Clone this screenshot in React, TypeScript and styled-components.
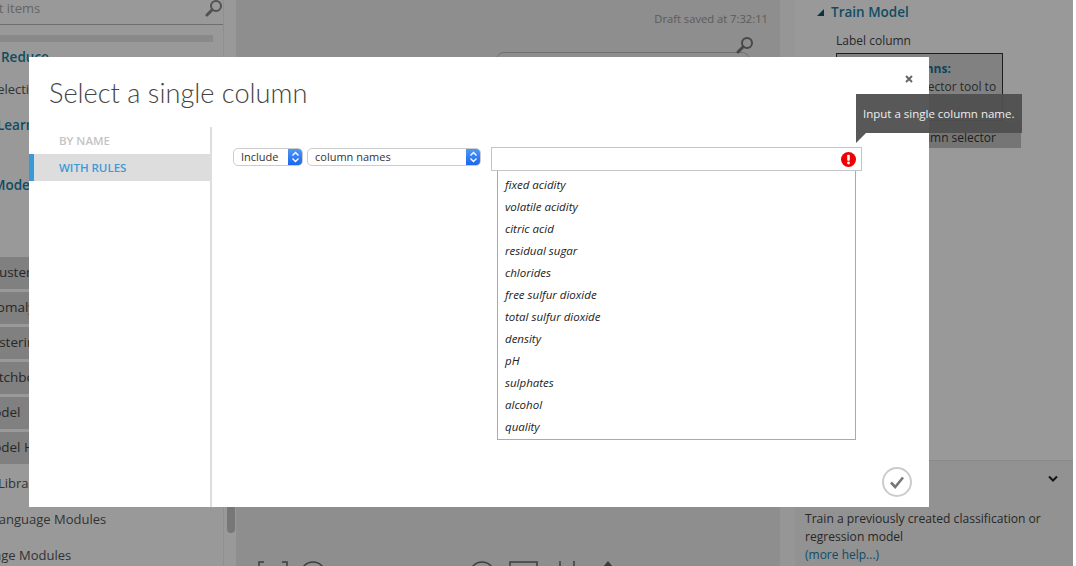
import * as React from "react";
import styled, { createGlobalStyle } from "styled-components";

const GlobalStyle = createGlobalStyle`
  html, body {
    margin: 0;
    padding: 0;
    background: #fff;
    overflow: hidden;
  }
  body {
    font-family: "Open Sans", "Noto Sans", sans-serif;
    color: #444;
  }
`;

const Stage = styled.div`
  position: relative;
  width: 1073px;
  height: 566px;
  overflow: hidden;
  display: grid;
  grid-template-columns: 237px 543px 15px 1fr;
  background: #fff;
`;

/* left palette */
const Sidebar = styled.div`
  display: flex;
  height: 566px;
  overflow: hidden;
  background: #fff;
`;

const PaletteList = styled.div`
  width: 223px;
  flex: none;
  overflow: hidden;
  font-size: 13px;
  color: #555;
`;

const SearchBox = styled.div`
  display: flex;
  align-items: center;
  justify-content: space-between;
  box-sizing: border-box;
  width: 238px;
  height: 25px;
  margin: 0 0 10px -10px;
  padding: 0 4px 8px 0;
  border: 1px solid #b8b8b8;
  border-top: 0;
  color: #aaa;
  font-size: 13px;
  white-space: nowrap;
  overflow: hidden;
`;

const SearchHint = styled.span`
  margin-left: -102px;
`;

const SearchGlyph = styled.span`
  color: #888;
  line-height: 0;
`;

const PaletteBar = styled.div`
  width: 213px;
  height: 7px;
  background: #e4e4e4;
`;

const Group = styled.div<{ $top: number; $shift: number }>`
  margin: ${(p) => p.$top}px 0 0 ${(p) => p.$shift}px;
  height: 20px;
  line-height: 20px;
  white-space: nowrap;
  color: #1c7fa6;
  font-weight: 600;
  font-size: 13.5px;
`;

const Leaf = styled.div<{ $top: number; $shift: number }>`
  margin: ${(p) => p.$top}px 0 0 ${(p) => p.$shift}px;
  height: 20px;
  line-height: 20px;
  white-space: nowrap;
`;

const ModuleList = styled.div`
  margin-top: 62px;
`;

const ModuleRow = styled.div<{ $shift: number }>`
  height: 32px;
  line-height: 31px;
  margin-bottom: 3px;
  text-indent: ${(p) => p.$shift}px;
  background: #d5d5d5;
  white-space: nowrap;
  color: #444;
  font-size: 13.5px;
`;

const ScrollTrack = styled.div`
  width: 14px;
  box-sizing: border-box;
  flex: none;
  padding: 400px 0 0 3px;
  border-left: 1px solid #eee;
  border-right: 1px solid #eee;
`;

const ScrollThumb = styled.div`
  width: 8px;
  height: 133px;
  border-radius: 4px;
  background: #c6c6c6;
`;

/* canvas */
const Canvas = styled.div`
  display: flex;
  flex-direction: column;
  height: 566px;
  overflow: hidden;
  background: #ededed;
`;

const Draft = styled.div`
  margin-top: 11px;
  padding-right: 12px;
  text-align: right;
  font-size: 11.2px;
  line-height: 16px;
  color: #999;
`;

const CanvasSearch = styled.div`
  position: relative;
  box-sizing: border-box;
  width: 254px;
  height: 40px;
  margin: 25px 0 0 259px;
  border: 1px solid #bbb;
  border-radius: 8px;
`;

const CanvasSearchIcon = styled.div`
  position: absolute;
  top: -17px;
  right: -5px;
  color: #777;
`;

const CanvasTools = styled.div`
  display: flex;
  align-items: flex-start;
  margin-top: auto;
  height: 5px;
  padding-left: 21px;
  color: #666;
`;

const ToolIcon = styled.svg<{ $gap: number }>`
  flex: none;
  margin-left: ${(p) => p.$gap}px;
`;

const Gutter = styled.div`
  background: #fafafa;
  height: 566px;
`;

/* properties */
const Properties = styled.div`
  display: flex;
  flex-direction: column;
  height: 566px;
  background: #fff;
  font-size: 12px;
  color: #444;
`;

const PropHead = styled.div`
  display: flex;
  align-items: center;
  gap: 7px;
  height: 24px;
  padding-left: 22px;
  box-sizing: border-box;
  color: #1c7fa6;
  font-size: 13.5px;
  font-weight: 600;
`;

const Caret = styled.span`
  width: 0;
  height: 0;
  border-style: solid;
  border-width: 0 0 7px 7px;
  border-color: transparent transparent #14546e transparent;
`;

const PropLabel = styled.div`
  margin: 9px 0 4px 41px;
  font-size: 12px;
  line-height: 16px;
`;

const ColumnBox = styled.div`
  box-sizing: border-box;
  width: 167px;
  height: 68px;
  margin-left: 41px;
  padding: 6px 0 0 6px;
  border: 1px solid #333;
  background: #d8d8d8;
  line-height: 18px;
  white-space: nowrap;
  overflow: hidden;
`;

const BoxTitle = styled.div`
  color: #14749a;
  font-weight: 700;
`;

const LaunchButton = styled.div`
  box-sizing: border-box;
  width: 185px;
  height: 27px;
  margin-left: 41px;
  padding: 8px 25px 0 0;
  background: #c3c3c3;
  color: #333;
  line-height: 18px;
  text-align: right;
`;

const QuickHelp = styled.div`
  margin-top: auto;
  box-sizing: border-box;
  height: 106px;
  padding: 14px 0 0 10px;
  border-top: 1px solid #e6e6e6;
  background: #f3f3f3;
`;

const HelpChevron = styled.div`
  display: flex;
  justify-content: flex-end;
  height: 35px;
  padding-right: 15px;
  color: #222;
`;

const HelpText = styled.div`
  width: 250px;
  line-height: 18px;
  color: #444;
  font-size: 12.1px;
`;

const HelpLink = styled.div`
  line-height: 18px;
  color: #1c7fa6;
`;

/* dialog */
const Overlay = styled.div`
  position: absolute;
  inset: 0;
  padding: 57px 0 0 29px;
  background: rgba(0, 0, 0, 0.4);
`;

const Dialog = styled.div`
  display: flex;
  flex-direction: column;
  width: 900px;
  height: 450px;
  background: #fff;
`;

const DialogHeader = styled.div`
  display: flex;
  justify-content: space-between;
  box-sizing: border-box;
  height: 70px;
  padding: 17px 16px 0 20px;
`;

const Title = styled.h1`
  margin: 0;
  font-family: "Lato", "Open Sans", sans-serif;
  font-size: 27.2px;
  line-height: 38px;
  font-weight: 300;
  color: #444;
`;

const CloseButton = styled.div`
  padding-top: 1px;
  color: #666;
  line-height: 0;
`;

const DialogBody = styled.div`
  display: flex;
  flex: 1;
  min-height: 0;
`;

const Nav = styled.div`
  box-sizing: border-box;
  flex: none;
  width: 183px;
  border-right: 2px solid #ddd;
`;

const NavItem = styled.div<{ $active?: boolean }>`
  box-sizing: border-box;
  height: 27px;
  padding-left: ${(p) => (p.$active ? 25 : 30)}px;
  border-left: ${(p) => (p.$active ? "5px solid #3a9ad9" : "0")};
  background: ${(p) => (p.$active ? "#ddd" : "transparent")};
  color: ${(p) => (p.$active ? "#3a9ad9" : "#c4c4c4")};
  font-size: 11.5px;
  font-weight: 600;
  line-height: 28px;
`;

const Rules = styled.div`
  display: flex;
  flex-direction: column;
  flex: 1;
  padding: 21px 0 0 21px;
`;

const RuleRow = styled.div`
  display: flex;
  align-items: flex-start;
`;

const SelectBox = styled.div<{ $width: number; $gap: number }>`
  display: flex;
  justify-content: space-between;
  box-sizing: border-box;
  width: ${(p) => p.$width}px;
  height: 18px;
  margin-right: ${(p) => p.$gap}px;
  padding-left: 7px;
  border: 1px solid #ccc;
  border-radius: 5px;
  font-size: 11px;
  line-height: 16px;
  color: #333;
  overflow: hidden;
`;

const Stepper = styled.span`
  display: flex;
  align-items: center;
  justify-content: center;
  flex: none;
  width: 15px;
  margin: -1px -1px -1px 0;
  background: linear-gradient(#4f9bf8, #1a62f0);
  color: #fff;
`;

const InputWrap = styled.div`
  position: relative;
  margin-top: -1px;
`;

const ColumnInput = styled.div`
  display: flex;
  align-items: center;
  justify-content: flex-end;
  box-sizing: border-box;
  width: 371px;
  height: 24px;
  padding-right: 5px;
  border: 1px solid #c4c4c4;
`;

const Tooltip = styled.div`
  position: absolute;
  left: 365px;
  bottom: 38px;
  box-sizing: border-box;
  width: 166px;
  height: 39px;
  padding-left: 7px;
  background: rgba(79, 79, 79, 0.95);
  color: #eee;
  font-size: 11.5px;
  line-height: 39px;
  white-space: nowrap;

  &::after {
    content: "";
    position: absolute;
    left: 0;
    top: 100%;
    border-style: solid;
    border-width: 10px 10px 0 0;
    border-color: rgba(79, 79, 79, 0.95) transparent transparent transparent;
  }
`;

const Options = styled.div`
  box-sizing: border-box;
  width: 359px;
  height: 269px;
  margin-left: 264px;
  padding-top: 3px;
  border: 1px solid #aaa;
  border-top: 0;
`;

const Option = styled.div`
  height: 22px;
  padding-left: 7px;
  font-size: 11.5px;
  font-style: italic;
  line-height: 22px;
  color: #222;
`;

const Footer = styled.div`
  display: flex;
  justify-content: flex-end;
  margin-top: auto;
  padding: 0 17px 10px 0;
`;

const columns = [
  "fixed acidity",
  "volatile acidity",
  "citric acid",
  "residual sugar",
  "chlorides",
  "free sulfur dioxide",
  "total sulfur dioxide",
  "density",
  "pH",
  "sulphates",
  "alcohol",
  "quality",
];

const modules = [
  { label: "Cluster", shift: -13 },
  { label: "Anomaly", shift: -20 },
  { label: "Clustering", shift: -21 },
  { label: "Matchbox", shift: -21 },
  { label: "Model", shift: -19 },
  { label: "Model H", shift: -19 },
];

const Magnifier = ({ size }: { size: number }) => (
  <svg width={size} height={size} viewBox="0 0 18 18" fill="none">
    <circle cx="11" cy="7" r="5" stroke="currentColor" strokeWidth="2" />
    <path d="M7.2 10.8 2 16" stroke="currentColor" strokeWidth="3" strokeLinecap="round" />
  </svg>
);

const StepArrows = () => (
  <svg width="9" height="12" viewBox="0 0 9 12" fill="none" stroke="currentColor" strokeWidth="1.4">
    <path d="M1.5 4.5 4.5 1.5 7.5 4.5" />
    <path d="M1.5 7.5 4.5 10.5 7.5 7.5" />
  </svg>
);

const App = () => {
  return (
    <>
      <GlobalStyle />
      <Stage>
        <Sidebar>
          <PaletteList>
            <SearchBox>
              <SearchHint>Search experiment items</SearchHint>
              <SearchGlyph>
                <Magnifier size={18} />
              </SearchGlyph>
            </SearchBox>
            <PaletteBar />
            <Group $top={5} $shift={1}>Reduce</Group>
            <Leaf $top={12} $shift={-10}>Selection</Leaf>
            <Group $top={16} $shift={-3}>Learning</Group>
            <Group $top={40} $shift={-7}>Model</Group>
            <ModuleList>
              {modules.map((m) => (
                <ModuleRow key={m.label} $shift={m.shift}>{m.label}</ModuleRow>
              ))}
            </ModuleList>
            <Leaf $top={9} $shift={-2}>Library</Leaf>
            <Leaf $top={16} $shift={-8}>Language Modules</Leaf>
            <Leaf $top={16} $shift={-43}>Language Modules</Leaf>
          </PaletteList>
          <ScrollTrack>
            <ScrollThumb />
          </ScrollTrack>
        </Sidebar>

        <Canvas>
          <Draft>Draft saved at 7:32:11</Draft>
          <CanvasSearch>
            <CanvasSearchIcon>
              <Magnifier size={18} />
            </CanvasSearchIcon>
          </CanvasSearch>
          <CanvasTools>
            <ToolIcon $gap={0} width="30" height="12" viewBox="0 0 30 12" fill="none" stroke="currentColor" strokeWidth="1.5">
              <path d="M6 1H1v11M24 1h5v11" />
            </ToolIcon>
            <ToolIcon $gap={12} width="26" height="12" viewBox="0 0 26 12" fill="none" stroke="currentColor" strokeWidth="1.5">
              <circle cx="13" cy="13" r="12" />
            </ToolIcon>
            <ToolIcon $gap={143} width="26" height="12" viewBox="0 0 26 12" fill="none" stroke="currentColor" strokeWidth="1.5">
              <circle cx="13" cy="13" r="12" />
            </ToolIcon>
            <ToolIcon $gap={14} width="29" height="12" viewBox="0 0 29 12" fill="none" stroke="currentColor" strokeWidth="1.5">
              <path d="M1 12V1h27v11" />
            </ToolIcon>
            <ToolIcon $gap={21} width="16" height="12" viewBox="0 0 16 12" fill="none" stroke="currentColor" strokeWidth="1.5">
              <path d="M1 0v12M15 0v12" />
            </ToolIcon>
            <ToolIcon $gap={27} width="12" height="12" viewBox="0 0 12 12" fill="currentColor">
              <path d="M6 0 11 6H1z" />
            </ToolIcon>
          </CanvasTools>
        </Canvas>

        <Gutter />

        <Properties>
          <PropHead>
            <Caret />
            Train Model
          </PropHead>
          <PropLabel>Label column</PropLabel>
          <ColumnBox>
            <BoxTitle>Selected columns:</BoxTitle>
            <div>Use column selector tool to</div>
            <div>select a column</div>
          </ColumnBox>
          <LaunchButton>Launch column selector</LaunchButton>
          <QuickHelp>
            <HelpChevron>
              <svg width="10" height="8" viewBox="0 0 10 8" fill="none" stroke="currentColor" strokeWidth="2">
                <path d="M1 1.5 5 5.5 9 1.5" />
              </svg>
            </HelpChevron>
            <HelpText>Train a previously created classification or regression model</HelpText>
            <HelpLink>(more help...)</HelpLink>
          </QuickHelp>
        </Properties>

        <Overlay>
          <Dialog>
            <DialogHeader>
              <Title>Select a single column</Title>
              <CloseButton>
                <svg width="8" height="8" viewBox="0 0 8 8" fill="none" stroke="currentColor" strokeWidth="2">
                  <path d="M1 1 7 7M7 1 1 7" />
                </svg>
              </CloseButton>
            </DialogHeader>
            <DialogBody>
              <Nav>
                <NavItem>BY NAME</NavItem>
                <NavItem $active>WITH RULES</NavItem>
              </Nav>
              <Rules>
                <RuleRow>
                  <SelectBox $width={70} $gap={4}>
                    Include
                    <Stepper><StepArrows /></Stepper>
                  </SelectBox>
                  <SelectBox $width={174} $gap={10}>
                    column names
                    <Stepper><StepArrows /></Stepper>
                  </SelectBox>
                  <InputWrap>
                    <ColumnInput>
                      <svg width="15" height="15" viewBox="0 0 15 15">
                        <circle cx="7.5" cy="7.5" r="7.5" fill="#f00000" />
                        <rect x="6.2" y="2.8" width="2.6" height="6" rx="0.8" fill="#fff" />
                        <circle cx="7.5" cy="11" r="1.4" fill="#fff" />
                      </svg>
                    </ColumnInput>
                    <Tooltip>Input a single column name.</Tooltip>
                  </InputWrap>
                </RuleRow>
                <Options>
                  {columns.map((c) => (
                    <Option key={c}>{c}</Option>
                  ))}
                </Options>
                <Footer>
                  <svg width="30" height="30" viewBox="0 0 30 30" fill="none">
                    <circle cx="15" cy="15" r="14" stroke="#ccc" strokeWidth="2" />
                    <path d="M9 15.5 13.2 20 21 10.5" stroke="#777" strokeWidth="2.6" />
                  </svg>
                </Footer>
              </Rules>
            </DialogBody>
          </Dialog>
        </Overlay>
      </Stage>
    </>
  );
};

export default App;
